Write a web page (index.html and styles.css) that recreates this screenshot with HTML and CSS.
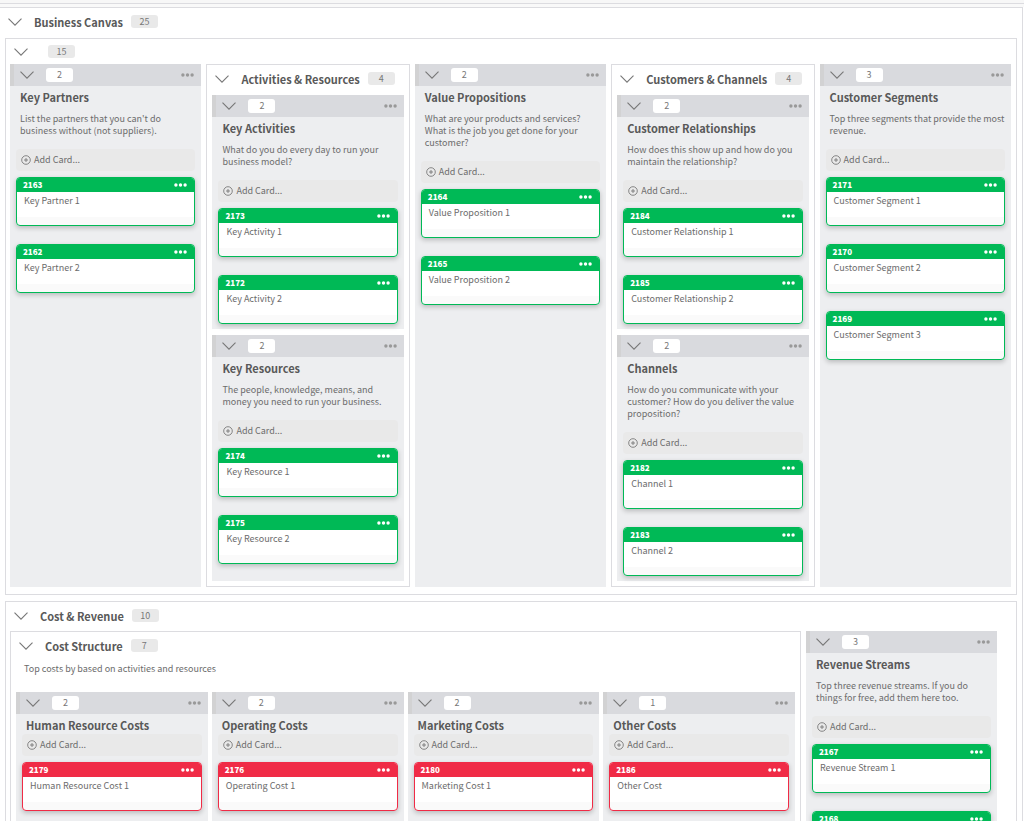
FILE: index.html
```html
<!DOCTYPE html>
<html lang="en">
<head>
<meta charset="utf-8">
<title>Business Canvas</title>
<link rel="stylesheet" href="styles.css">
</head>
<body>
<svg class="sprite" aria-hidden="true">
  <symbol id="chevron" viewBox="0 0 14 8"><path d="M.5 .7 7 7.2 13.500 .7" fill="none" stroke="currentColor" stroke-width="1.100"/></symbol>
  <symbol id="dots" viewBox="0 0 13 4"><circle cx="1.900" cy="2" r="1.700"/><circle cx="6.500" cy="2" r="1.700"/><circle cx="11.100" cy="2" r="1.700"/></symbol>
  <symbol id="plus" viewBox="0 0 10 10"><circle cx="5" cy="5" r="4.300" fill="none" stroke="currentColor" stroke-width=".8"/><path d="M5 3v4M3 5h4" stroke="currentColor" stroke-width=".8"/></symbol>
</svg>
<div class="strip"></div>
<main class="board">
  <header class="head"><button class="toggle" aria-label="Collapse"><svg><use href="#chevron"/></svg></button><h1 class="name">Business Canvas</h1><span class="badge">25</span></header>

  <section class="frame">
    <header class="head head-short"><button class="toggle" aria-label="Collapse"><svg><use href="#chevron"/></svg></button><span class="name"></span><span class="badge">15</span></header>
    <div class="canvas">
      <section class="lane">
        <header class="lane-head"><button class="toggle" aria-label="Collapse"><svg><use href="#chevron"/></svg></button><span class="badge">2</span><button class="more" aria-label="Lane menu"><svg><use href="#dots"/></svg></button></header>
        <h2 class="title">Key Partners</h2>
        <p class="desc">List the partners that you can't do business without (not suppliers).</p>
        <button class="add"><svg><use href="#plus"/></svg>Add Card...</button>
        <article class="card"><header class="card-head">2163<button class="more" aria-label="Card menu"><svg><use href="#dots"/></svg></button></header><p class="card-text">Key Partner 1</p></article>
        <article class="card"><header class="card-head">2162<button class="more" aria-label="Card menu"><svg><use href="#dots"/></svg></button></header><p class="card-text">Key Partner 2</p></article>
      </section>

      <section class="group">
        <header class="head"><button class="toggle" aria-label="Collapse"><svg><use href="#chevron"/></svg></button><h2 class="name">Activities &amp; Resources</h2><span class="badge">4</span></header>
        <div class="stack">
          <section class="lane">
            <header class="lane-head"><button class="toggle" aria-label="Collapse"><svg><use href="#chevron"/></svg></button><span class="badge">2</span><button class="more" aria-label="Lane menu"><svg><use href="#dots"/></svg></button></header>
            <h3 class="title">Key Activities</h3>
            <p class="desc">What do you do every day to run your business model?</p>
            <button class="add"><svg><use href="#plus"/></svg>Add Card...</button>
            <article class="card"><header class="card-head">2173<button class="more" aria-label="Card menu"><svg><use href="#dots"/></svg></button></header><p class="card-text">Key Activity 1</p></article>
            <article class="card"><header class="card-head">2172<button class="more" aria-label="Card menu"><svg><use href="#dots"/></svg></button></header><p class="card-text">Key Activity 2</p></article>
          </section>
          <section class="lane">
            <header class="lane-head"><button class="toggle" aria-label="Collapse"><svg><use href="#chevron"/></svg></button><span class="badge">2</span><button class="more" aria-label="Lane menu"><svg><use href="#dots"/></svg></button></header>
            <h3 class="title">Key Resources</h3>
            <p class="desc">The people, knowledge, means, and money you need to run your business.</p>
            <button class="add"><svg><use href="#plus"/></svg>Add Card...</button>
            <article class="card"><header class="card-head">2174<button class="more" aria-label="Card menu"><svg><use href="#dots"/></svg></button></header><p class="card-text">Key Resource 1</p></article>
            <article class="card"><header class="card-head">2175<button class="more" aria-label="Card menu"><svg><use href="#dots"/></svg></button></header><p class="card-text">Key Resource 2</p></article>
          </section>
        </div>
      </section>

      <section class="lane">
        <header class="lane-head"><button class="toggle" aria-label="Collapse"><svg><use href="#chevron"/></svg></button><span class="badge">2</span><button class="more" aria-label="Lane menu"><svg><use href="#dots"/></svg></button></header>
        <h2 class="title">Value Propositions</h2>
        <p class="desc">What are your products and services? What is the job you get done for your customer?</p>
        <button class="add"><svg><use href="#plus"/></svg>Add Card...</button>
        <article class="card"><header class="card-head">2164<button class="more" aria-label="Card menu"><svg><use href="#dots"/></svg></button></header><p class="card-text">Value Proposition 1</p></article>
        <article class="card"><header class="card-head">2165<button class="more" aria-label="Card menu"><svg><use href="#dots"/></svg></button></header><p class="card-text">Value Proposition 2</p></article>
      </section>

      <section class="group">
        <header class="head"><button class="toggle" aria-label="Collapse"><svg><use href="#chevron"/></svg></button><h2 class="name">Customers &amp; Channels</h2><span class="badge">4</span></header>
        <div class="stack">
          <section class="lane">
            <header class="lane-head"><button class="toggle" aria-label="Collapse"><svg><use href="#chevron"/></svg></button><span class="badge">2</span><button class="more" aria-label="Lane menu"><svg><use href="#dots"/></svg></button></header>
            <h3 class="title">Customer Relationships</h3>
            <p class="desc">How does this show up and how do you maintain the relationship?</p>
            <button class="add"><svg><use href="#plus"/></svg>Add Card...</button>
            <article class="card"><header class="card-head">2184<button class="more" aria-label="Card menu"><svg><use href="#dots"/></svg></button></header><p class="card-text">Customer Relationship 1</p></article>
            <article class="card"><header class="card-head">2185<button class="more" aria-label="Card menu"><svg><use href="#dots"/></svg></button></header><p class="card-text">Customer Relationship 2</p></article>
          </section>
          <section class="lane">
            <header class="lane-head"><button class="toggle" aria-label="Collapse"><svg><use href="#chevron"/></svg></button><span class="badge">2</span><button class="more" aria-label="Lane menu"><svg><use href="#dots"/></svg></button></header>
            <h3 class="title">Channels</h3>
            <p class="desc">How do you communicate with your customer? How do you deliver the value proposition?</p>
            <button class="add"><svg><use href="#plus"/></svg>Add Card...</button>
            <article class="card"><header class="card-head">2182<button class="more" aria-label="Card menu"><svg><use href="#dots"/></svg></button></header><p class="card-text">Channel 1</p></article>
            <article class="card"><header class="card-head">2183<button class="more" aria-label="Card menu"><svg><use href="#dots"/></svg></button></header><p class="card-text">Channel 2</p></article>
          </section>
        </div>
      </section>

      <section class="lane">
        <header class="lane-head"><button class="toggle" aria-label="Collapse"><svg><use href="#chevron"/></svg></button><span class="badge">3</span><button class="more" aria-label="Lane menu"><svg><use href="#dots"/></svg></button></header>
        <h2 class="title">Customer Segments</h2>
        <p class="desc">Top three segments that provide the most revenue.</p>
        <button class="add"><svg><use href="#plus"/></svg>Add Card...</button>
        <article class="card"><header class="card-head">2171<button class="more" aria-label="Card menu"><svg><use href="#dots"/></svg></button></header><p class="card-text">Customer Segment 1</p></article>
        <article class="card"><header class="card-head">2170<button class="more" aria-label="Card menu"><svg><use href="#dots"/></svg></button></header><p class="card-text">Customer Segment 2</p></article>
        <article class="card"><header class="card-head">2169<button class="more" aria-label="Card menu"><svg><use href="#dots"/></svg></button></header><p class="card-text">Customer Segment 3</p></article>
      </section>
    </div>
  </section>

  <section class="frame frame-last">
    <header class="head"><button class="toggle" aria-label="Collapse"><svg><use href="#chevron"/></svg></button><h2 class="name">Cost &amp; Revenue</h2><span class="badge">10</span></header>
    <div class="finance">
      <section class="group">
        <header class="head"><button class="toggle" aria-label="Collapse"><svg><use href="#chevron"/></svg></button><h3 class="name">Cost Structure</h3><span class="badge">7</span></header>
        <p class="group-desc">Top costs by based on activities and resources</p>
        <div class="costs">
          <section class="lane">
            <header class="lane-head"><button class="toggle" aria-label="Collapse"><svg><use href="#chevron"/></svg></button><span class="badge">2</span><button class="more" aria-label="Lane menu"><svg><use href="#dots"/></svg></button></header>
            <h4 class="title">Human Resource Costs</h4>
            <button class="add"><svg><use href="#plus"/></svg>Add Card...</button>
            <article class="card cost"><header class="card-head">2179<button class="more" aria-label="Card menu"><svg><use href="#dots"/></svg></button></header><p class="card-text">Human Resource Cost 1</p></article>
          </section>
          <section class="lane">
            <header class="lane-head"><button class="toggle" aria-label="Collapse"><svg><use href="#chevron"/></svg></button><span class="badge">2</span><button class="more" aria-label="Lane menu"><svg><use href="#dots"/></svg></button></header>
            <h4 class="title">Operating Costs</h4>
            <button class="add"><svg><use href="#plus"/></svg>Add Card...</button>
            <article class="card cost"><header class="card-head">2176<button class="more" aria-label="Card menu"><svg><use href="#dots"/></svg></button></header><p class="card-text">Operating Cost 1</p></article>
          </section>
          <section class="lane">
            <header class="lane-head"><button class="toggle" aria-label="Collapse"><svg><use href="#chevron"/></svg></button><span class="badge">2</span><button class="more" aria-label="Lane menu"><svg><use href="#dots"/></svg></button></header>
            <h4 class="title">Marketing Costs</h4>
            <button class="add"><svg><use href="#plus"/></svg>Add Card...</button>
            <article class="card cost"><header class="card-head">2180<button class="more" aria-label="Card menu"><svg><use href="#dots"/></svg></button></header><p class="card-text">Marketing Cost 1</p></article>
          </section>
          <section class="lane">
            <header class="lane-head"><button class="toggle" aria-label="Collapse"><svg><use href="#chevron"/></svg></button><span class="badge">1</span><button class="more" aria-label="Lane menu"><svg><use href="#dots"/></svg></button></header>
            <h4 class="title">Other Costs</h4>
            <button class="add"><svg><use href="#plus"/></svg>Add Card...</button>
            <article class="card cost"><header class="card-head">2186<button class="more" aria-label="Card menu"><svg><use href="#dots"/></svg></button></header><p class="card-text">Other Cost</p></article>
          </section>
        </div>
      </section>
      <section class="lane">
        <header class="lane-head"><button class="toggle" aria-label="Collapse"><svg><use href="#chevron"/></svg></button><span class="badge">3</span><button class="more" aria-label="Lane menu"><svg><use href="#dots"/></svg></button></header>
        <h3 class="title">Revenue Streams</h3>
        <p class="desc">Top three revenue streams. If you do things for free, add them here too.</p>
        <button class="add"><svg><use href="#plus"/></svg>Add Card...</button>
        <article class="card"><header class="card-head">2167<button class="more" aria-label="Card menu"><svg><use href="#dots"/></svg></button></header><p class="card-text">Revenue Stream 1</p></article>
        <article class="card"><header class="card-head">2168<button class="more" aria-label="Card menu"><svg><use href="#dots"/></svg></button></header><p class="card-text">Revenue Stream 2</p></article>
      </section>
    </div>
  </section>
</main>
</body>
</html>
```

FILE: styles.css
```css
* { box-sizing: border-box; }

body {
  margin: 0;
  background: #fff;
  color: #6c6c6c;
  font-family: "Noto Sans CJK SC", "Noto Sans", sans-serif;
  font-size: 9px;
  scrollbar-width: none;
}

h1, h2, h3, h4, p { margin: 0; }

button {
  padding: 0;
  border: 0;
  background: none;
  color: inherit;
  font: inherit;
  cursor: pointer;
}

svg { display: block; }

.sprite { position: absolute; width: 0; height: 0; }

.strip {
  height: 7px;
  border-bottom: 3px solid #f9f9f9;
  background: linear-gradient(#f7f7f7 3px, #dcdce0 3px);
}

.board {
  display: flex;
  flex-direction: column;
  gap: 6px;
  min-height: 814px;
  margin-right: 1px;
  padding: 0 5px 6px 5px;
  border-top: 1px solid #dcdce0;
  border-right: 1px solid #dcdce0;
}

.head {
  display: flex;
  align-items: center;
  height: 30px;
  padding: 0 0 3px 8px;
}

.board > .head { margin-bottom: -6px; padding-left: 3px; }
.head-short { height: 25px; padding-bottom: 0; }

.name {
  margin: 0 8px 0 12px;
  color: #595959;
  font-size: 11px;
  font-weight: 700;
  line-height: 16px;
}

.toggle { width: 14px; height: 8px; color: #777; }
.toggle svg { width: 14px; height: 8px; }

.badge {
  width: 27px;
  height: 13px;
  border-radius: 3px;
  background: #e9e9e9;
  color: #777;
  font-size: 9px;
  line-height: 13px;
  text-align: center;
}

.frame, .group { border: 1px solid #dcdce0; }
.frame-last { display: flex; flex: 1 0 auto; flex-direction: column; }
.frame-last > .head { height: 29px; padding-bottom: 2px; }

.canvas {
  display: grid;
  grid-template-columns: 192fr 204fr 192fr 204fr 192fr;
  gap: 5px;
  padding: 0 5px 7px 4px;
}

.finance {
  display: grid;
  flex: 1;
  grid-template-columns: 791fr 191fr;
  gap: 5px;
  padding: 0 19px 6px 4px;
}

.group { display: flex; min-width: 0; flex-direction: column; }

.stack {
  display: flex;
  flex: 1;
  flex-direction: column;
  gap: 6px;
  padding: 0 5px 5px;
}
.stack .lane:last-child { flex: 1; }

.group-desc {
  padding: 1px 13px 17px;
  line-height: 12px;
}

.costs {
  display: grid;
  flex: 1;
  grid-template-columns: repeat(4, 1fr);
  gap: 4px;
  padding: 0 5px 5px;
}

.lane {
  min-width: 0;
  padding: 0 6px 5px;
  background: #edeef0;
}

.lane-head {
  display: flex;
  align-items: center;
  gap: 12px;
  height: 22px;
  margin: 0 -6px;
  padding: 0 7px 0 6px;
  border-left: 4px solid #d2d2d3;
  background: #d9dade;
}
.lane-head .badge { height: 14px; background: #fff; line-height: 14px; }

.more { width: 13px; height: 4px; margin-left: auto; color: #999; }
.more svg { width: 13px; height: 4px; fill: currentColor; }

.title {
  height: 20px;
  padding: 3px 4px 0;
  color: #595959;
  font-size: 11px;
  font-weight: 700;
  line-height: 16px;
}

.desc {
  padding: 7px 0 12px 4px;
  line-height: 12px;
}

.add {
  display: flex;
  align-items: center;
  gap: 3px;
  width: 100%;
  height: 22px;
  margin-bottom: 6px;
  padding: 0 0 1px 5px;
  border-radius: 4px;
  background: #e9e9e9;
  line-height: 16px;
}
.add svg { width: 10px; height: 10px; }

.card {
  height: 49px;
  overflow: hidden;
  border: 1px solid #00b956;
  border-radius: 4px;
  background: linear-gradient(#fff 39px, #fafafa 39px);
  box-shadow: 0 2px 5px rgba(0, 0, 0, .22);
}
.card + .card { margin-top: 18px; }

.card-head {
  display: flex;
  align-items: center;
  height: 14px;
  padding: 0 7px 0 6px;
  background: #00b956;
  color: #fff;
  font-size: 8px;
  font-weight: 900;
  line-height: 14px;
}
.card-head .more { color: #fff; }
.card-text { padding: 1px 7px; line-height: 16px; }

.cost { border-color: #f02b46; }
.cost .card-head { background: #f02b46; }
```
